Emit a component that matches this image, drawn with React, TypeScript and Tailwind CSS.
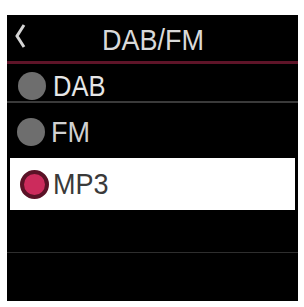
export default function App() {
  const font = { fontFamily: '"Liberation Sans", Arial, sans-serif' }

  return (
    <div className="w-[304px] h-[307px] bg-white pt-[15px] pl-[7px]" style={font}>
      <div className="w-[291px] h-[286px] bg-black flex flex-col">
        <div className="relative h-[46px] flex items-center">
          <svg className="absolute left-[7px] top-[8px]" width="13" height="26" viewBox="0 0 13 26">
            <polyline points="10,2 3,13 10,24" fill="none" stroke="#d4d4d4" strokeWidth="3" />
          </svg>
          <span className="ml-[95px] inline-block origin-left scale-x-[0.9] text-[30px] leading-none text-[#d9d9d9] pt-[3px]">
            DAB/FM
          </span>
        </div>
        <div className="h-[3px] bg-[#5e1428]" />

        <div className="h-[37px] flex items-center pl-[11px] gap-[7px] pt-[6px]">
          <div className="w-[28px] h-[28px] rounded-full bg-[#6e6e6e]" />
          <span className="inline-block origin-left scale-x-[0.85] text-[30px] leading-none text-[#e6e6e6]">DAB</span>
        </div>
        <div className="h-[2px] bg-[#3a3a3a]" />

        <div className="h-[53px] flex items-center pl-[10px] gap-[6px] pt-[4px]">
          <div className="w-[28px] h-[28px] rounded-full bg-[#6e6e6e]" />
          <span className="inline-block origin-left scale-x-[0.9] text-[30px] leading-none text-[#d0d0d0]">FM</span>
        </div>
        <div className="h-[2px]" />

        <div className="h-[52px] mx-[3px] bg-white flex items-center pl-[10px] gap-[4px]">
          <div className="w-[29px] h-[29px] rounded-full bg-[#cc2b5c] border-[4px] border-[#5a1226]" />
          <span className="inline-block origin-left scale-x-[0.9] text-[30px] leading-none text-[#3a3a3a]">MP3</span>
        </div>
        <div className="h-[2px]" />

        <div className="h-[40px]" />
        <div className="h-[1px] bg-[#2e2e2e]" />
        <div className="h-[48px]" />
      </div>
    </div>
  )
}
